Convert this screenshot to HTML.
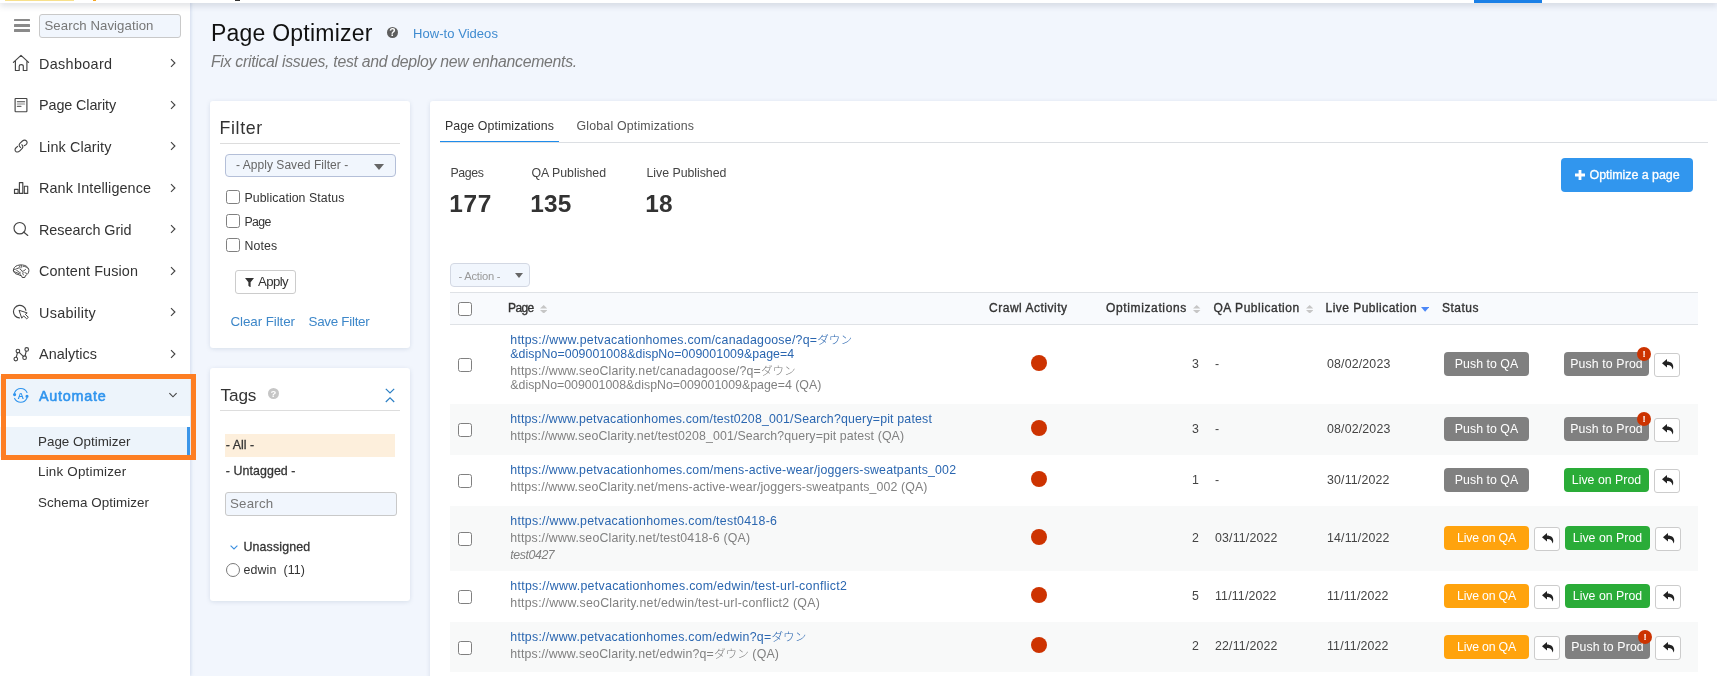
<!DOCTYPE html>
<html lang="en">
<head>
<meta charset="utf-8">
<title>Page Optimizer</title>
<style>
*{box-sizing:border-box;margin:0;padding:0}
html,body{width:1717px;height:676px;overflow:hidden}
body{background:#f2f6fd;font-family:"Liberation Sans","Noto Sans CJK JP",sans-serif;color:#333;position:relative;font-size:12.4px}
a{text-decoration:none;color:#428bca}
.abs{position:absolute}
/* own compositing layers -> greyscale text antialiasing like the reference */
#side,#panel,.card,h1,#subt,#howto,.help{will-change:transform}

/* ---------- top bar ---------- */
#topbar{position:absolute;left:0;top:0;width:1717px;height:3px;background:#fff;box-shadow:0 1px 7px rgba(60,70,90,.38);z-index:20}
#topbar i{position:absolute;top:0;display:block}
#topbar .y{left:5px;width:69px;height:1px;background:#f7e08c}
#topbar .o{left:93px;width:3px;height:1px;background:#f5a623}
#topbar .k{left:235px;width:5px;height:1px;background:#333}
#topbar .b{left:1474px;width:68px;height:3px;background:#1a7fe6}

/* ---------- sidebar ---------- */
#side{position:absolute;left:0;top:0;width:190px;height:676px;background:#fff;box-shadow:1px 0 3px rgba(150,170,205,.35);z-index:5}
#burger{position:absolute;left:14px;top:19px;width:16px;height:13px}
#burger i{display:block;height:2.4px;background:#8a8a8a;margin-bottom:2.8px;border-radius:.5px}
#navsearch{position:absolute;left:39px;top:14px;width:142px;height:24px;border:1px solid #c9c9c9;border-radius:3px;background:#f1f6fd;font-size:13.2px;line-height:22px;padding-left:4.5px;color:#777;white-space:nowrap;overflow:hidden}
.nav{list-style:none}
.nav li.it{position:absolute;left:0;width:190px;height:41.47px;line-height:41.47px;font-size:14.4px;letter-spacing:.35px;color:#333;padding-left:39px;white-space:nowrap}
.nav li.it svg.ic{position:absolute;left:12px;top:12px;width:18px;height:18px;overflow:visible}
.nav li.it svg.ch{position:absolute;left:168px;top:14.3px;width:10px;height:10px;overflow:visible}
.nav li.act{background:#edf4fb;color:#2f94ee;-webkit-text-stroke:.55px #2f94ee;height:40.3px}
.sub li{position:absolute;left:0;width:190px;height:30px;line-height:30px;font-size:13.4px;letter-spacing:.3px;color:#333;padding-left:38px;white-space:nowrap}
.sub li.cur{background:#edf4fb;border-right:3px solid #3b95e8;width:190px}
#hl{position:absolute;left:1px;top:374px;width:195px;height:86px;border:5px solid #fd7e23;z-index:30;pointer-events:none}

/* ---------- header ---------- */
h1{position:absolute;left:210.5px;top:18px;font-size:23px;line-height:30px;font-weight:normal;color:#111;letter-spacing:.45px;white-space:nowrap}
.help{position:absolute;border-radius:50%;color:#fff;text-align:center;font-weight:bold}
#h1help{left:387px;top:27px;width:11px;height:11px;background:#5e5e5e;font-size:10.5px;line-height:11.6px}
#howto{position:absolute;left:412.8px;top:26.2px;font-size:13px;line-height:15px;color:#3f8bd0;white-space:nowrap}
#subt{position:absolute;left:210.5px;top:51px;font-size:15.8px;line-height:22px;font-style:italic;color:#777;letter-spacing:.1px;white-space:nowrap}

/* ---------- cards ---------- */
.card{position:absolute;background:#fff;border-radius:3px;box-shadow:0 1px 4px rgba(120,140,170,.22)}
#filter{left:210px;top:101px;width:200px;height:247px}
#tags{left:210px;top:368px;width:200px;height:233px}
.card h2{position:absolute;left:10.5px;font-size:17.8px;font-weight:normal;line-height:24px;color:#333;letter-spacing:.45px}
.card hr{position:absolute;left:10px;width:180px;border:0;border-top:1px solid #ddd}
.sel{position:absolute;border:1px solid #b4bfd8;border-radius:4px;background:#f1f6fd;color:#666;white-space:nowrap}
.sel:after{content:"";position:absolute;border-style:solid;border-color:#666 transparent transparent transparent}
#savedsel{left:15px;top:53px;width:171px;height:23px;font-size:12px;line-height:21px;padding-left:10px}
#savedsel:after{right:11px;top:9px;border-width:6px 5.5px 0 5.5px}
.ck{position:absolute;left:16px;height:14px;line-height:14px;font-size:12.3px;letter-spacing:.2px;white-space:nowrap;color:#333}
.ck input,.cb{appearance:none;-webkit-appearance:none;width:14px;height:14px;margin:0;vertical-align:top;border:1.2px solid #808080;border-radius:2.6px;background:#fff}
.cb{position:relative;top:1px}
.ck>span{margin-left:4.5px;position:relative;top:.7px}
#applybtn{position:absolute;left:25px;top:169px;width:61px;height:24px;border:1px solid #ccc;border-radius:3px;background:#fff;font-family:inherit;font-size:13.2px;line-height:22px;color:#333;padding:0 0 0 22px;text-align:left;letter-spacing:.2px;white-space:nowrap}
#applybtn svg{position:absolute;left:8.5px;top:6.5px;width:9px;height:9.5px}
.flink{position:absolute;top:212px;font-size:13.4px;line-height:18px;color:#3d87c9;letter-spacing:.3px;white-space:nowrap}

#tagshelp{left:58px;top:20px;width:11px;height:11px;background:#c6c6c6;font-size:9.5px;line-height:11.6px}
#collapse{position:absolute;left:175px;top:20px;width:10px;height:15px;overflow:visible}
.tagrow{position:absolute;left:15px;width:170px;height:23px;line-height:23px;font-size:12.4px;-webkit-text-stroke:.28px #333;color:#333;padding-left:.8px;white-space:nowrap;letter-spacing:0}
.tagrow.on{background:#fdefdc}
#tagsearch{position:absolute;left:15px;top:124px;width:172px;height:24px;border:1px solid #c9c9c9;border-radius:3px;background:#f1f6fd;font-size:13.3px;line-height:22px;padding-left:4px;color:#777}
#unas{position:absolute;left:33.5px;top:169.9px;font-size:12.4px;line-height:18px;-webkit-text-stroke:.28px #333;color:#333;letter-spacing:.05px;white-space:nowrap}
#unasch{position:absolute;left:19.5px;top:176.5px;width:8px;height:5px;overflow:visible}
#radio{position:absolute;left:16px;top:195px;width:14px;height:14px;border:1.1px solid #7a7a7a;border-radius:50%;background:#fff}
#edwin{position:absolute;left:33.5px;top:193px;font-size:12.4px;line-height:18px;color:#333;letter-spacing:.25px;white-space:pre}

/* ---------- main panel ---------- */
#panel{position:absolute;left:430px;top:101px;width:1290px;height:580px;background:#fff;border-radius:3px;box-shadow:0 1px 4px rgba(120,140,170,.22)}
.tab{position:absolute;top:15px;height:27px;font-size:12.35px;line-height:20px;letter-spacing:.25px;white-space:nowrap;color:#555}
.tab.on{color:#333;border-bottom:2px solid #1f8ceb}
#tabline{position:absolute;left:10px;top:41px;width:1268px;height:1px;background:#dcdfe3}
.stat{position:absolute;top:64px;white-space:nowrap}
.stat dt{font-size:12.35px;line-height:16px;color:#444;letter-spacing:.25px}
.stat dd{font-size:24.4px;line-height:30px;font-weight:bold;color:#333;margin-top:8px;margin-left:-1.2px;letter-spacing:.25px}
#optbtn{position:absolute;left:1131px;top:57px;width:132px;height:34px;border-radius:4px;background:#3196ee;color:#fff;font-size:12.5px;line-height:34px;padding-left:28.5px;white-space:nowrap;letter-spacing:.1px;-webkit-text-stroke:.3px #fff}
#optbtn svg{position:absolute;left:14px;top:12px;width:10px;height:10px}
#actsel{left:20px;top:162px;width:80px;height:23.6px;font-size:11.2px;line-height:24.5px;padding-left:7.5px;color:#999;border-color:#d3d8e3;letter-spacing:.15px}
#actsel:after{right:6.5px;top:9px;border-width:5.2px 4px 0 4px;border-top-color:#666}

table{position:absolute;left:20px;top:191px;width:1248px;border-collapse:collapse;table-layout:fixed;font-size:12.35px}
th{height:32px;font-size:12px;padding-bottom:.4px !important;background:#f8fafd;border-top:1px solid #dfe2e6;border-bottom:1px solid #dfe2e6;text-align:left;font-weight:normal;-webkit-text-stroke:.35px #333;color:#333;padding:0 8px;white-space:nowrap;letter-spacing:.28px;position:relative}
td{padding:0 8px 1px 8px;vertical-align:middle;color:#444;letter-spacing:0.17px;white-space:nowrap;position:relative}
tr.z td{background:#f8f9f9}
td.u{vertical-align:top;padding-top:8.8px;padding-left:10.3px}
th.c,td.c{text-align:center}
th.r,td.r{text-align:right}
.sort{display:inline-block;width:7.4px;height:8.6px;margin-left:6.3px;vertical-align:-1.2px}
.sortd{display:inline-block;width:8.2px;height:4.8px;margin-left:4.2px;vertical-align:.6px}
.u1{display:block;color:#2a66b0;line-height:14px;letter-spacing:.37px}
.u2{display:block;color:#808080;line-height:14px;margin-top:3.1px;letter-spacing:.37px}
.jp{font-weight:300;font-size:11.6px;letter-spacing:0;line-height:0}
.u3{display:block;color:#808080;font-style:italic;line-height:14.4px;margin-top:2.9px;letter-spacing:.1px}
.dot{display:inline-block;width:16px;height:16px;border-radius:50%;background:#cd3301;vertical-align:middle;position:relative;top:-1px}
.btn{position:absolute;height:24px;border-radius:4px;color:#fff;font-size:12.3px;line-height:25.6px;text-align:center;letter-spacing:.2px;white-space:nowrap}
.g{background:#808080}.o{background:#ffa30d}.gr{background:#2aac38}
.undo{position:absolute;width:26px;height:24px;border:1px solid #ccc;border-radius:3px;background:#fff}
.undo svg{position:absolute;left:6.5px;top:5px;width:12px;height:11px}
.bad{position:absolute;width:14px;height:14px;border-radius:50%;background:#cc3300;color:#fff;font-size:9.5px;font-weight:bold;line-height:14px;text-align:center;letter-spacing:0}
</style>
</head>
<body>

<div id="topbar"><i class="y"></i><i class="o"></i><i class="k"></i><i class="b"></i></div>

<nav id="side">
  <div id="burger"><i></i><i></i><i></i></div>
  <div id="navsearch"><span style="letter-spacing:0.07px">Search Navigation</span></div>
  <ul class="nav">
    <li class="it" style="top:43.95px"><span style="letter-spacing:0.33px">Dashboard</span><svg class="ch" viewBox="0 0 10 10"><path d="M3 1.2 L6.9 5 L3 8.8" fill="none" stroke="#444" stroke-width="1.15"/></svg></li>
    <li class="it" style="top:85.42px"><span style="letter-spacing:-0.11px">Page Clarity</span><svg class="ch" viewBox="0 0 10 10"><path d="M3 1.2 L6.9 5 L3 8.8" fill="none" stroke="#444" stroke-width="1.15"/></svg></li>
    <li class="it" style="top:126.89px"><span style="letter-spacing:0.11px">Link Clarity</span><svg class="ch" viewBox="0 0 10 10"><path d="M3 1.2 L6.9 5 L3 8.8" fill="none" stroke="#444" stroke-width="1.15"/></svg></li>
    <li class="it" style="top:168.36px"><span style="letter-spacing:0.1px">Rank Intelligence</span><svg class="ch" viewBox="0 0 10 10"><path d="M3 1.2 L6.9 5 L3 8.8" fill="none" stroke="#444" stroke-width="1.15"/></svg></li>
    <li class="it" style="top:209.83px"><span style="letter-spacing:-0.03px">Research Grid</span><svg class="ch" viewBox="0 0 10 10"><path d="M3 1.2 L6.9 5 L3 8.8" fill="none" stroke="#444" stroke-width="1.15"/></svg></li>
    <li class="it" style="top:251.30px"><span style="letter-spacing:0.1px">Content Fusion</span><svg class="ch" viewBox="0 0 10 10"><path d="M3 1.2 L6.9 5 L3 8.8" fill="none" stroke="#444" stroke-width="1.15"/></svg></li>
    <li class="it" style="top:292.77px"><span style="letter-spacing:0.28px">Usability</span><svg class="ch" viewBox="0 0 10 10"><path d="M3 1.2 L6.9 5 L3 8.8" fill="none" stroke="#444" stroke-width="1.15"/></svg></li>
    <li class="it" style="top:334.24px"><span style="letter-spacing:0.03px">Analytics</span><svg class="ch" viewBox="0 0 10 10"><path d="M3 1.2 L6.9 5 L3 8.8" fill="none" stroke="#444" stroke-width="1.15"/></svg></li>
    <li class="it act" style="top:375.71px"><span style="letter-spacing:0.72px">Automate</span><svg class="ch" viewBox="0 0 10 10"><path d="M1.4 3.2 L5 6.8 L8.6 3.2" fill="none" stroke="#444" stroke-width="1.15"/></svg></li>
  </ul>
  <ul class="nav sub">
    <li class="cur" style="top:426.5px"><span style="letter-spacing:0.01px">Page Optimizer</span></li>
    <li style="top:457px"><span style="letter-spacing:0.2px">Link Optimizer</span></li>
    <li style="top:487.5px"><span style="letter-spacing:0.05px">Schema Optimizer</span></li>
  </ul>
  <svg id="icons" class="abs" style="left:0;top:0" width="190" height="676" viewBox="0 0 190 676" fill="none" stroke="#444" stroke-width="1.15" stroke-linejoin="round" stroke-linecap="round">
    <!-- home -->
    <path d="M13.4 62.4 L21 55.3 L28.6 62.4 M15.4 61 V70.5 H19.2 V66.2 Q19.2 64.6 21.2 64.6 Q23.3 64.6 23.3 66.2 V70.5 H26.9 V61"/>
    <!-- page -->
    <rect x="15.1" y="98.5" width="11.8" height="13.2" rx=".6"/>
    <path d="M17.4 101.7 H24.6"/><path d="M17.4 104 H24.6" stroke="#888"/><path d="M17.4 106.3 H21" stroke="#666"/>
    <!-- link -->
    <path d="M24.3 145.6 C26.6 145.2 27.9 142.8 26.6 141.2 C25.4 139.8 23.6 140 22.4 141 L19.9 143.3 C18.7 144.6 19 146.5 20.6 147.4"/><path d="M17.6 146.4 L15.8 148 C14.6 149.2 14.8 151 16.2 151.8 C17.6 152.4 18.8 151.8 19.8 150.8 L22.2 148.4 C23.2 147.2 23 145.6 21.8 144.8"/>
    <!-- bars -->
    <rect x="14.5" y="189.3" width="3.6" height="4.1"/><rect x="19.4" y="182.6" width="3.4" height="10.8"/><rect x="24.3" y="186.2" width="3.4" height="7.2"/>
    <!-- search -->
    <circle cx="19.7" cy="228.2" r="5.7"/><path d="M23.9 232.2 L27.8 235.5"/>
    <!-- brain -->
    <path d="M13.4 270.4 C13.2 268.4 15 266.2 17.6 265.4 C20.6 264.5 24.4 264.8 26.6 266.4 C28.6 267.8 29.4 270.2 28.6 272.2 C28 273.8 26.8 275 25.4 275.6 L24.8 277.5 L22.2 277.5 L21.6 275.8 C20.2 275.6 19 275 18 274.4 C16.4 274.2 15 273.6 14.4 272.6 C13.8 272 13.5 271.2 13.4 270.4 Z" stroke-width="1"/>
    <path d="M14.2 269.4 C15.4 269.6 16 269 16.8 268.6 C17.8 268.2 18.6 268.4 19.2 267.6 C19.6 267 19.4 266.4 19.8 265.8 M21.4 265.6 C21.2 266.6 21.4 267.2 21 268 M23 266.6 C24.2 266.2 25 266.4 25.8 267 C26.4 267.4 27 267.4 27.4 268 M19.8 269 C20.6 269.8 21.4 270 22 270.8 C22.4 271.4 22.4 272 23 272.4 M23 271 C24.2 271 25 270.4 25.4 269.4 M16.8 270.4 C17.6 270.6 18.2 271.2 18.6 271.8 C19 272.4 19.6 272.6 20.2 272.4 M14 271.6 C15.4 272 16.4 272.8 17.6 273 C18.8 273.2 19.6 274 20.6 274.2 M22.8 273 C22.6 274 23 274.6 23.6 275 M25 272.4 C25.2 273.2 25.8 273.6 26.6 273.4" stroke-width=".95"/>
    <!-- usability -->
    <path d="M19.4 317.9 A6.3 6.3 0 1 1 25.9 310.3"/>
    <path d="M19.4 310.4 L27.2 312.9 L25.3 314.3 L28.4 317.3 L26.7 318.8 L23.6 315.9 L22 317.9 Z" stroke-width="1"/>
    <!-- analytics -->
    <circle cx="15.8" cy="359" r="1.8"/><circle cx="17.9" cy="351" r="1.8"/><circle cx="24.6" cy="357.7" r="1.8"/><circle cx="26.7" cy="349.4" r="1.8"/>
    <path d="M16.3 357.2 L17.4 352.8 M19.2 352.3 L23.3 356.4 M25.1 355.9 L26.2 351.2"/>
    <!-- automate -->
    <g stroke="#2f94ee">
      <path d="M14.6 392.6 A6.8 6.8 0 0 1 27 392.4 M26.9 398.2 A6.8 6.8 0 0 1 14.6 398.4" stroke-width="1.1"/>
      <circle cx="14.6" cy="394.6" r="1" fill="#2f94ee"/><circle cx="27" cy="396.3" r="1" fill="#2f94ee"/>
    </g>
    <text x="20.75" y="399" text-anchor="middle" font-family="'Liberation Sans',sans-serif" font-size="9" font-weight="bold" fill="#2f94ee" stroke="none">A</text>
  </svg>
</nav>

<div id="hl"></div>

<h1><span style="letter-spacing:0.22px">Page Optimizer</span></h1>
<span class="help" id="h1help">?</span>
<a id="howto"><span style="letter-spacing:0.05px">How-to Videos</span></a>
<p id="subt"><span style="letter-spacing:-0.28px">Fix critical issues, test and deploy new enhancements.</span></p>

<section class="card" id="filter">
  <h2 style="top:14.7px;left:9.6px"><span style="letter-spacing:0.6px">Filter</span></h2>
  <hr style="top:42px">
  <div class="sel" id="savedsel"><span style="letter-spacing:0.04px">- Apply Saved Filter -</span></div>
  <label class="ck" style="top:89px"><input type="checkbox"><span><span style="letter-spacing:0.08px">Publication Status</span></span></label>
  <label class="ck" style="top:113px"><input type="checkbox"><span><span style="letter-spacing:-0.6px">Page</span></span></label>
  <label class="ck" style="top:137px"><input type="checkbox"><span><span style="letter-spacing:0.15px">Notes</span></span></label>
  <button id="applybtn"><svg viewBox="0 0 9 9.5"><path d="M0 0 H9 L5.6 4.2 V9.5 L3.4 7.8 V4.2 Z" fill="#333"/></svg><span style="letter-spacing:-0.6px">Apply</span></button>
  <a class="flink" style="left:20.5px"><span style="letter-spacing:-0.09px">Clear Filter</span></a>
  <a class="flink" style="left:98.5px"><span style="letter-spacing:-0.28px">Save Filter</span></a>
</section>
<section class="card" id="tags">
  <h2 style="top:14.6px;font-size:17.2px"><span style="letter-spacing:-0.13px">Tags</span></h2>
  <span class="help" id="tagshelp">?</span>
  <svg id="collapse" viewBox="0 0 10 15"><path d="M.8 .8 L5 5 L9.2 .8 M.8 14 L5 9.8 L9.2 14" fill="none" stroke="#2b7fc4" stroke-width="1.2"/></svg>
  <hr style="top:42px">
  <div class="tagrow on" style="top:66px"><span style="letter-spacing:-0px">- All -</span></div>
  <div class="tagrow" style="top:91.5px"><span style="letter-spacing:0.07px">- Untagged -</span></div>
  <div id="tagsearch"><span style="letter-spacing:0.2px">Search</span></div>
  <svg id="unasch" viewBox="0 0 8 5"><path d="M.6 .6 L4 4 L7.4 .6" fill="none" stroke="#3b8fe0" stroke-width="1.1"/></svg>
  <div id="unas"><span style="letter-spacing:0.13px">Unassigned</span></div>
  <span id="radio"></span>
  <div id="edwin"><span style="letter-spacing:0.1px">edwin  (11)</span></div>
</section>
<section id="panel">
  <a class="tab on" style="left:10px;padding:0 5px"><span style="letter-spacing:0.11px">Page Optimizations</span></a>
  <a class="tab" style="left:146.5px"><span style="letter-spacing:0.19px">Global Optimizations</span></a>
  <div id="tabline"></div>
  <dl class="stat" style="left:20.5px"><dt><span style="letter-spacing:-0.4px">Pages</span></dt><dd><span style="letter-spacing:0.6px">177</span></dd></dl>
  <dl class="stat" style="left:101.5px"><dt><span style="letter-spacing:-0.02px">QA Published</span></dt><dd><span style="letter-spacing:0.1px">135</span></dd></dl>
  <dl class="stat" style="left:216.5px"><dt><span style="letter-spacing:-0.03px">Live Published</span></dt><dd><span style="letter-spacing:0px">18</span></dd></dl>
  <a id="optbtn"><svg viewBox="0 0 10 10"><path d="M3.6 0 H6.4 V3.6 H10 V6.4 H6.4 V10 H3.6 V6.4 H0 V3.6 H3.6 Z" fill="#fff"/></svg><span style="letter-spacing:-0.06px">Optimize a page</span></a>
  <div class="sel" id="actsel"><span style="letter-spacing:-0.24px">- Action -</span></div>
  <table>
    <colgroup><col style="width:50px"><col style="width:480px"><col style="width:118px"><col style="width:109px"><col style="width:112px"><col style="width:115px"><col style="width:264px"></colgroup>
    <thead><tr>
      <th><input type="checkbox" class="cb" style="top:1.2px"></th>
      <th><span style="letter-spacing:-0.6px">Page</span><svg class="sort" viewBox="0 0 7.4 8.6"><path d="M0 3.5 L3.7 0 L7.4 3.5 Z M0 5.1 L3.7 8.6 L7.4 5.1 Z" fill="#c6c6c6"/></svg></th>
      <th style="padding-left:9px"><span style="letter-spacing:0.52px">Crawl Activity</span></th>
      <th class="r"><span style="letter-spacing:0.63px">Optimizations</span><svg class="sort" viewBox="0 0 7.4 8.6"><path d="M0 3.5 L3.7 0 L7.4 3.5 Z M0 5.1 L3.7 8.6 L7.4 5.1 Z" fill="#c6c6c6"/></svg></th>
      <th style="padding-left:6.5px"><span style="letter-spacing:0.53px">QA Publication</span><svg class="sort" viewBox="0 0 7.4 8.6"><path d="M0 3.5 L3.7 0 L7.4 3.5 Z M0 5.1 L3.7 8.6 L7.4 5.1 Z" fill="#c6c6c6"/></svg></th>
      <th style="padding-left:6.5px"><span style="letter-spacing:0.47px">Live Publication</span><svg class="sortd" viewBox="0 0 8.2 4.8"><path d="M0 0 H8.2 L4.1 4.8 Z" fill="#4b87f7"/></svg></th>
      <th><span style="letter-spacing:0.48px">Status</span></th>
    </tr></thead>
    <tbody>
    <tr style="height:79px">
      <td style="padding-bottom:0"><input type="checkbox" class="cb"></td>
      <td class="u" style="padding-top:8px"><a class="u1"><span style="letter-spacing:0.24px">https://www.petvacationhomes.com/canadagoose/?q=<span class="jp">ダウン</span></span><br><span style="letter-spacing:0.07px">&amp;dispNo=009001008&amp;dispNo=009001009&amp;page=4</span></a><span class="u2"><span style="letter-spacing:0.18px">https://www.seoClarity.net/canadagoose/?q=<span class="jp">ダウン</span></span><br><span style="letter-spacing:0.01px">&amp;dispNo=009001008&amp;dispNo=009001009&amp;page=4 (QA)</span></span></td>
      <td class="c"><span class="dot"></span></td>
      <td class="r">3</td>
      <td>-</td>
      <td>08/02/2023</td>
      <td class="st"><span class="btn g" style="left:10px;top:27px;width:85px"><span style="letter-spacing:0.04px"><span style="letter-spacing:0.04px">Push to QA</span></span></span><span class="btn g" style="left:130px;top:27px;width:85px"><span style="letter-spacing:0.13px"><span style="letter-spacing:0.13px">Push to Prod</span></span></span><span class="bad" style="left:203px;top:22px">!</span><span class="undo" style="left:220px;top:28px"><svg viewBox="0 0 12 11"><path d="M5 0 L0 4.3 L5 8.6 V5.9 C8.2 5.8 10 7 10.6 10.6 C12.6 5.6 9.6 2.7 5 2.6 Z" fill="#222"/></svg></span></td>
    </tr>
    <tr class="z" style="height:51px">
      <td style="padding-bottom:0"><input type="checkbox" class="cb"></td>
      <td class="u"><a class="u1"><span style="letter-spacing:0.18px">https://www.petvacationhomes.com/test0208_001/Search?query=pit patest</span></a><span class="u2"><span style="letter-spacing:0.11px">https://www.seoClarity.net/test0208_001/Search?query=pit patest (QA)</span></span></td>
      <td class="c"><span class="dot"></span></td>
      <td class="r">3</td>
      <td>-</td>
      <td>08/02/2023</td>
      <td class="st"><span class="btn g" style="left:10px;top:13px;width:85px"><span style="letter-spacing:0.04px">Push to QA</span></span><span class="btn g" style="left:130px;top:13px;width:85px"><span style="letter-spacing:0.13px">Push to Prod</span></span><span class="bad" style="left:203px;top:8px">!</span><span class="undo" style="left:220px;top:14px"><svg viewBox="0 0 12 11"><path d="M5 0 L0 4.3 L5 8.6 V5.9 C8.2 5.8 10 7 10.6 10.6 C12.6 5.6 9.6 2.7 5 2.6 Z" fill="#222"/></svg></span></td>
    </tr>
    <tr style="height:51px">
      <td style="padding-bottom:0"><input type="checkbox" class="cb"></td>
      <td class="u"><a class="u1"><span style="letter-spacing:0.19px">https://www.petvacationhomes.com/mens-active-wear/joggers-sweatpants_002</span></a><span class="u2"><span style="letter-spacing:0.11px">https://www.seoClarity.net/mens-active-wear/joggers-sweatpants_002 (QA)</span></span></td>
      <td class="c"><span class="dot"></span></td>
      <td class="r">1</td>
      <td>-</td>
      <td>30/11/2022</td>
      <td class="st"><span class="btn g" style="left:10px;top:13px;width:85px"><span style="letter-spacing:0.04px">Push to QA</span></span><span class="btn gr" style="left:130px;top:13px;width:85px"><span style="letter-spacing:0.03px"><span style="letter-spacing:0.03px">Live on Prod</span></span></span><span class="undo" style="left:220px;top:14px"><svg viewBox="0 0 12 11"><path d="M5 0 L0 4.3 L5 8.6 V5.9 C8.2 5.8 10 7 10.6 10.6 C12.6 5.6 9.6 2.7 5 2.6 Z" fill="#222"/></svg></span></td>
    </tr>
    <tr class="z" style="height:65px">
      <td style="padding-bottom:0"><input type="checkbox" class="cb"></td>
      <td class="u"><a class="u1"><span style="letter-spacing:0.27px">https://www.petvacationhomes.com/test0418-6</span></a><span class="u2"><span style="letter-spacing:0.18px">https://www.seoClarity.net/test0418-6 (QA)</span></span><span class="u3"><span style="letter-spacing:-0.42px">test0427</span></span></td>
      <td class="c"><span class="dot"></span></td>
      <td class="r">2</td>
      <td>03/11/2022</td>
      <td>14/11/2022</td>
      <td class="st"><span class="btn o" style="left:10px;top:20px;width:85px"><span style="letter-spacing:-0.2px"><span style="letter-spacing:-0.2px">Live on QA</span></span></span><span class="undo" style="left:100px;top:21px"><svg viewBox="0 0 12 11"><path d="M5 0 L0 4.3 L5 8.6 V5.9 C8.2 5.8 10 7 10.6 10.6 C12.6 5.6 9.6 2.7 5 2.6 Z" fill="#222"/></svg></span><span class="btn gr" style="left:131px;top:20px;width:85px"><span style="letter-spacing:0.03px">Live on Prod</span></span><span class="undo" style="left:221px;top:21px"><svg viewBox="0 0 12 11"><path d="M5 0 L0 4.3 L5 8.6 V5.9 C8.2 5.8 10 7 10.6 10.6 C12.6 5.6 9.6 2.7 5 2.6 Z" fill="#222"/></svg></span></td>
    </tr>
    <tr style="height:51px">
      <td style="padding-bottom:0"><input type="checkbox" class="cb"></td>
      <td class="u"><a class="u1"><span style="letter-spacing:0.3px">https://www.petvacationhomes.com/edwin/test-url-conflict2</span></a><span class="u2"><span style="letter-spacing:0.23px">https://www.seoClarity.net/edwin/test-url-conflict2 (QA)</span></span></td>
      <td class="c"><span class="dot"></span></td>
      <td class="r">5</td>
      <td>11/11/2022</td>
      <td>11/11/2022</td>
      <td class="st"><span class="btn o" style="left:10px;top:13px;width:85px"><span style="letter-spacing:-0.2px">Live on QA</span></span><span class="undo" style="left:100px;top:14px"><svg viewBox="0 0 12 11"><path d="M5 0 L0 4.3 L5 8.6 V5.9 C8.2 5.8 10 7 10.6 10.6 C12.6 5.6 9.6 2.7 5 2.6 Z" fill="#222"/></svg></span><span class="btn gr" style="left:131px;top:13px;width:85px"><span style="letter-spacing:0.03px">Live on Prod</span></span><span class="undo" style="left:221px;top:14px"><svg viewBox="0 0 12 11"><path d="M5 0 L0 4.3 L5 8.6 V5.9 C8.2 5.8 10 7 10.6 10.6 C12.6 5.6 9.6 2.7 5 2.6 Z" fill="#222"/></svg></span></td>
    </tr>
    <tr class="z" style="height:50px">
      <td style="padding-bottom:0"><input type="checkbox" class="cb"></td>
      <td class="u"><a class="u1"><span style="letter-spacing:0.27px">https://www.petvacationhomes.com/edwin?q=<span class="jp">ダウン</span></span></a><span class="u2"><span style="letter-spacing:0.17px">https://www.seoClarity.net/edwin?q=<span class="jp">ダウン</span> (QA)</span></span></td>
      <td class="c"><span class="dot"></span></td>
      <td class="r">2</td>
      <td>22/11/2022</td>
      <td>11/11/2022</td>
      <td class="st"><span class="btn o" style="left:10px;top:13px;width:85px"><span style="letter-spacing:-0.2px">Live on QA</span></span><span class="undo" style="left:100px;top:14px"><svg viewBox="0 0 12 11"><path d="M5 0 L0 4.3 L5 8.6 V5.9 C8.2 5.8 10 7 10.6 10.6 C12.6 5.6 9.6 2.7 5 2.6 Z" fill="#222"/></svg></span><span class="btn g" style="left:131px;top:13px;width:85px"><span style="letter-spacing:0.13px">Push to Prod</span></span><span class="bad" style="left:204px;top:8px">!</span><span class="undo" style="left:221px;top:14px"><svg viewBox="0 0 12 11"><path d="M5 0 L0 4.3 L5 8.6 V5.9 C8.2 5.8 10 7 10.6 10.6 C12.6 5.6 9.6 2.7 5 2.6 Z" fill="#222"/></svg></span></td>
    </tr>
    </tbody>
  </table>
</section>

</body>
</html>
